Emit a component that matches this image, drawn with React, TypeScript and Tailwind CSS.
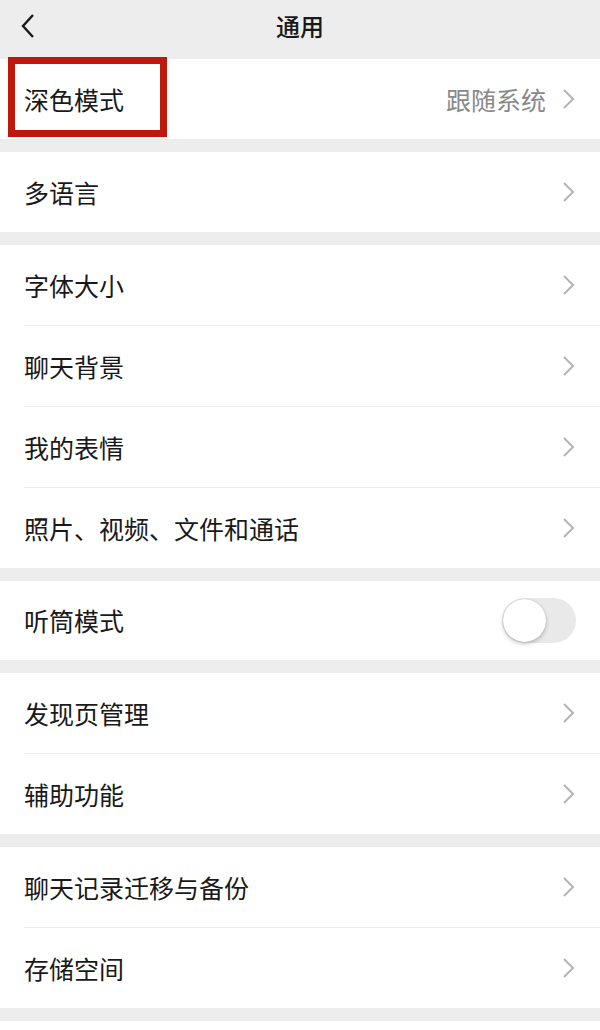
import React from "react";

interface IItem {
	label: string;
	value?: string;
	toggle?: boolean;
	highlight?: boolean;
}

const groups: IItem[][] = [
	[{ label: "深色模式", value: "跟随系统", highlight: true }],
	[{ label: "多语言" }],
	[
		{ label: "字体大小" },
		{ label: "聊天背景" },
		{ label: "我的表情" },
		{ label: "照片、视频、文件和通话" },
	],
	[{ label: "听筒模式", toggle: true }],
	[{ label: "发现页管理" }, { label: "辅助功能" }],
	[{ label: "聊天记录迁移与备份" }, { label: "存储空间" }],
];

const Chevron = () => (
	<svg width="14" height="22" viewBox="0 0 14 22" fill="none" className="shrink-0">
		<path d="M2 2 L11 11 L2 20" stroke="#b4b4b4" strokeWidth="2" strokeLinejoin="miter" />
	</svg>
);

const Toggle = () => (
	<div className="relative w-[74px] h-[45px] rounded-full bg-[#e9e9ea] shrink-0">
		<div className="absolute left-[1px] top-[1px] w-[43px] h-[43px] rounded-full bg-white shadow-[0_2px_4px_rgba(0,0,0,0.22),0_0_1px_rgba(0,0,0,0.25)]" />
	</div>
);

const Row = ({ item, first }: { item: IItem; first: boolean }) => (
	<div className="relative pl-[24px]">
		<div
			className={`flex items-center pr-[24px] ${
				first
					? item.toggle
						? "h-[79px]"
						: "h-[80px]"
					: "h-[81px] border-t border-[#ececec]"
			}`}
		>
			<span className="flex-1 text-[25px] text-[#191919] leading-none">
				{item.label}
			</span>
			{item.value && (
				<span className="text-[25px] text-[#888888] leading-none mr-[16px]">
					{item.value}
				</span>
			)}
			{item.toggle ? <Toggle /> : <Chevron />}
		</div>
		{item.highlight && (
			<div className="absolute left-[8px] top-[-2px] w-[159px] h-[80px] border-[7px] border-[#c0170c]" />
		)}
	</div>
);

export default function App() {
	return (
		<div
			className="w-[600px] h-[1030px] bg-[#ededed] overflow-hidden"
			style={{ fontFamily: '"Noto Sans CJK SC", "Noto Sans", sans-serif' }}
		>
			<div className="relative flex items-center justify-center h-[59px]">
				<svg
					width="16"
					height="26"
					viewBox="0 0 16 26"
					fill="none"
					className="absolute left-[20px] top-[13px]"
				>
					<path d="M13 2 L3 13 L13 24" stroke="#191919" strokeWidth="2.4" />
				</svg>
				<span className="text-[24px] font-medium text-[#191919] leading-none mb-[8px]">
					通用
				</span>
			</div>
			<div className="flex flex-col gap-[13px]">
				{groups.map((group, gi) => (
					<div key={gi} className="bg-white">
						{group.map((item, i) => (
							<Row key={item.label} item={item} first={i === 0} />
						))}
					</div>
				))}
				<div className="bg-white h-[20px]" />
			</div>
		</div>
	);
}
